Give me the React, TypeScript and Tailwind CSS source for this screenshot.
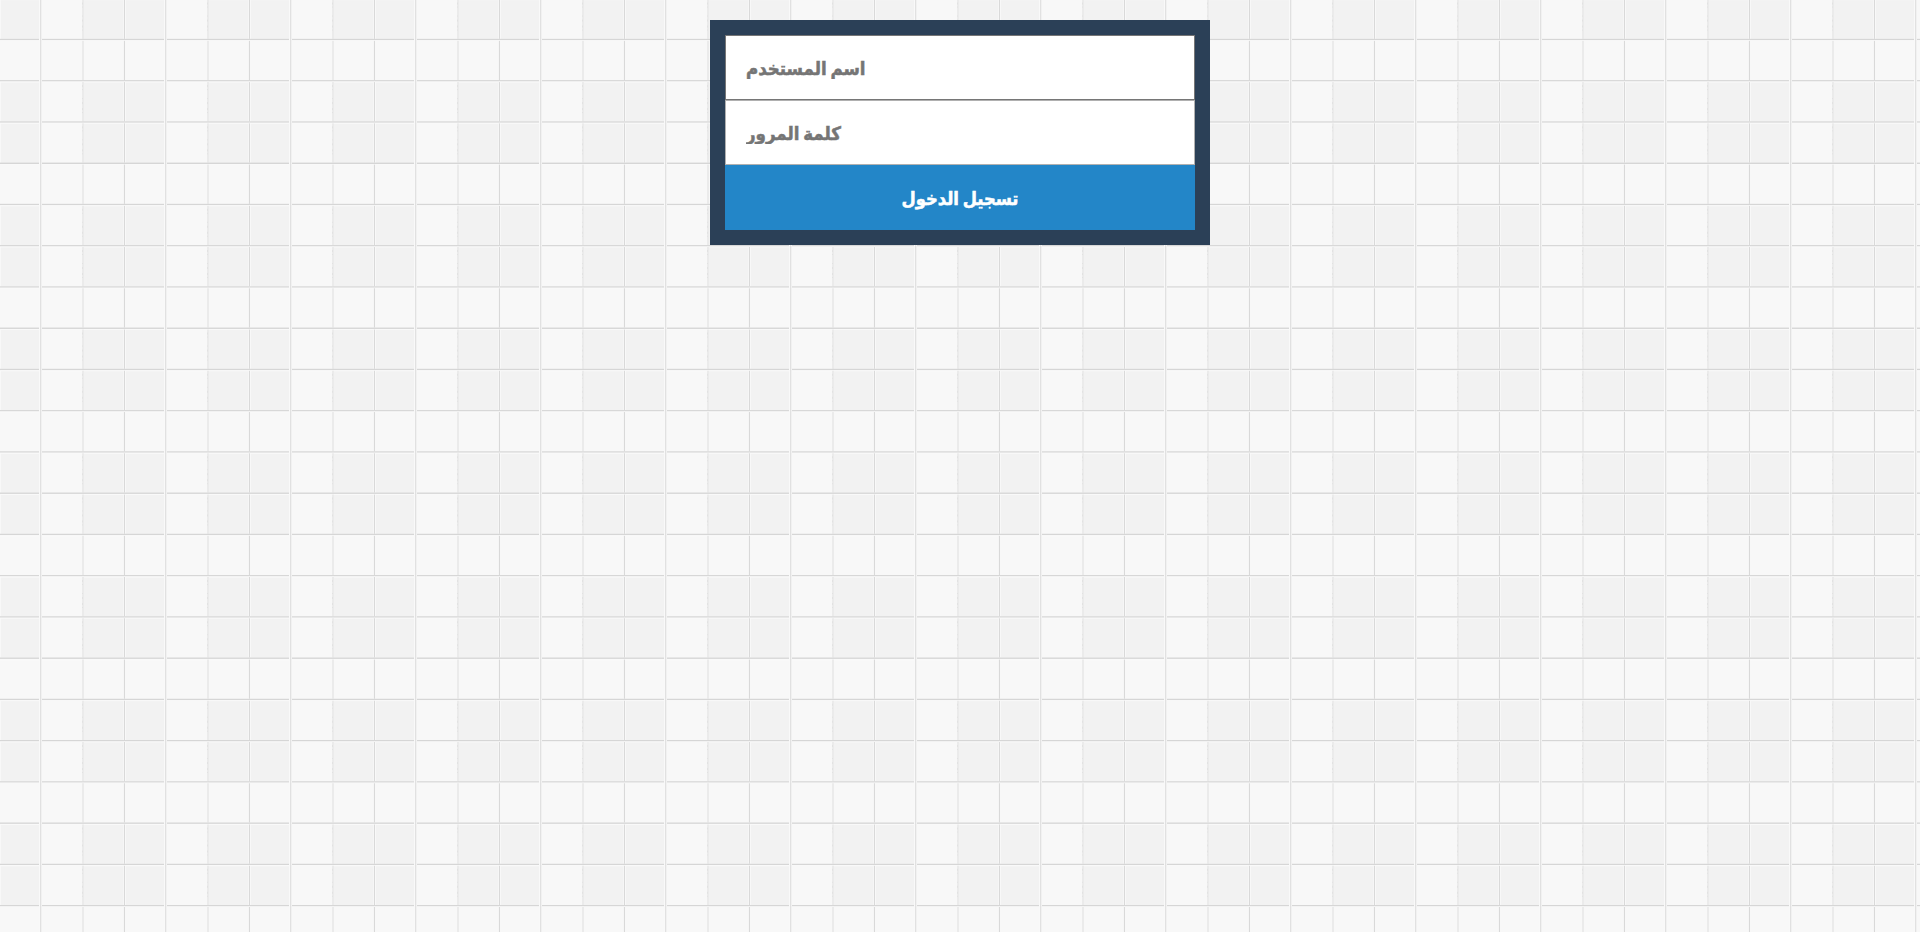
const COLUMN = 125;
const ROW = 41.245;

function GridBackground() {
  const rows = Array.from({ length: 24 }, (_, i) => i);
  const columns = Array.from({ length: 16 }, (_, i) => i * COLUMN);
  return (
    <svg className="absolute inset-0 -z-10 h-full w-full" aria-hidden="true">
      <rect width="100%" height="100%" fill="#f8f8f8" />
      {rows.map((r) => {
        const line = 38.85 + r * ROW;
        const top = line - ROW;
        const dark = r % 3 !== 1;
        return (
          <g key={r}>
            {dark &&
              columns.map((x) => (
                <g key={x} fill="#f2f2f2">
                  <rect x={x + 1} y={top + 2.5} width="38" height={ROW - 2.5} />
                  <rect x={x + 83} y={top + 2.5} width="41" height={ROW - 2.5} />
                </g>
              ))}
            {columns.map((x) => (
              <g key={x}>
                <rect x={x + 82} y={top + 2} width="2" height={ROW - 2} fill="#ebebeb" />
                {dark && (
                  <path
                    d={`M${x + 82.5} ${top + 5}V${line - 2}`}
                    stroke="#e2e2e2"
                    strokeDasharray="2 2 1 8 1 3 2 4"
                  />
                )}
                <rect x={x + 123} y={top + 2} width="1" height={ROW - 2} fill="#f6f6f6" />
                <rect x={x + 124} y={top + 2} width="1" height={ROW - 2} fill="#d9d9d9" />
              </g>
            ))}
            <rect y={line} width="100%" height="1.4" fill="#d6d6d6" />
            <rect y={line + 1.4} width="100%" height="1.2" fill="#f9f9f9" />
          </g>
        );
      })}
      {columns.map((x) => (
        <g key={x}>
          <rect x={x + 39} width="1" height="100%" fill="#f9f9f9" />
          <rect x={x + 40} width="1" height="100%" fill="#e1e1e1" />
          <rect x={x + 41} width="1" height="100%" fill="#f1f1f1" />
        </g>
      ))}
    </svg>
  );
}

export default function App() {
  return (
    <main className="relative isolate h-screen w-full overflow-hidden pt-5 font-['DejaVu_Sans_Condensed','DejaVu_Sans',sans-serif] font-stretch-condensed">
      <GridBackground />
      <form className="mx-auto flex w-[500px] flex-col bg-[#2b4057] p-[15px]" onSubmit={(e) => e.preventDefault()}>
        <input
          type="text"
          placeholder="اسم المستخدم"
          className="h-[65px] w-full border border-[#767676] bg-white px-5 pt-0.5 text-[18.5px] font-bold [word-spacing:-2px] placeholder:text-[#757575] placeholder:opacity-100 placeholder:[-webkit-text-stroke:0.5px_#757575] focus:outline-none"
        />
        <input
          type="password"
          placeholder="كلمة المرور"
          className="h-[65px] w-full border border-[#b0b0b0] bg-white px-5 pt-0.5 text-[18.5px] font-bold [word-spacing:-2px] placeholder:text-[#757575] placeholder:opacity-100 placeholder:[-webkit-text-stroke:0.5px_#757575] focus:outline-none"
        />
        <button type="submit" className="h-[65px] w-full bg-[#2386c8] pt-0.5 text-[18.2px] font-bold text-white [-webkit-text-stroke:0.5px_white] [word-spacing:-2px]">
          تسجيل الدخول
        </button>
      </form>
    </main>
  );
}
